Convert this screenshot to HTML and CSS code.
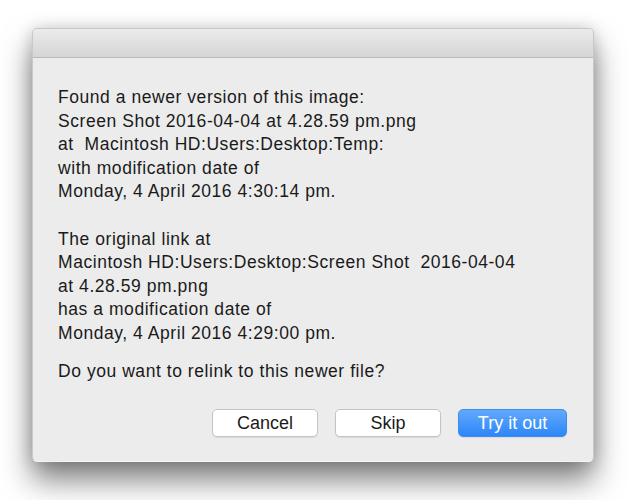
FILE: index.html
```html
<!DOCTYPE html>
<html lang="en">
  <head>
    <meta charset="UTF-8" />
    <title>Relink</title>
    <link rel="stylesheet" href="styles.css">
  </head>
  <body>
    <div class="dialog">
      <div class="titlebar"></div>
      <div class="content">
        <p>Found a newer version of this image:<br>
          Screen Shot 2016-04-04 at 4.28.59 pm.png<br>
          at&nbsp; Macintosh HD:Users:Desktop:Temp:<br>
          with modification date of<br>
          Monday, 4 April 2016 4:30:14 pm.</p>
        <p>The original link at<br>
          Macintosh HD:Users:Desktop:Screen Shot&nbsp; 2016-04-04<br>
          at 4.28.59 pm.png<br>
          has a modification date of<br>
          Monday, 4 April 2016 4:29:00 pm.</p>
        <p class="question">Do you want to relink to this newer file?</p>
      </div>
      <div class="buttons">
        <button class="btn">Cancel</button>
        <button class="btn">Skip</button>
        <button class="btn btn-primary">Try it out</button>
      </div>
    </div>
  </body>
</html>
```

FILE: styles.css
```css
* {
  margin: 0;
  padding: 0;
  box-sizing: border-box;
}

body {
  background: #fff;
  font-family: "Liberation Sans", Arial, sans-serif;
  color: #1a1a1a;
  min-height: 500px;
  padding: 28px 35px 38px 32px;
}

.dialog {
  width: 562px;
  height: 434px;
  background: #ececec;
  border-radius: 5px;
  border: 1px solid #c8c8c8;
  border-bottom-color: #f4f4f4;
  box-shadow: 0 18px 30px rgba(0, 0, 0, 0.5), 0 0 16px rgba(0, 0, 0, 0.16);
  overflow: hidden;
}

.titlebar {
  height: 29px;
  background: linear-gradient(#ebebeb, #d5d5d5);
  border-bottom: 1px solid #b9b9b9;
}

.content {
  padding: 28px 0 0 25px;
  font-size: 17.5px;
  letter-spacing: 0.55px;
  line-height: 23.6px;
}

.content p {
  margin-bottom: 23.6px;
}

.content .question {
  margin-top: -9.5px;
  margin-bottom: 0;
}

.buttons {
  display: flex;
  justify-content: flex-end;
  gap: 17px;
  padding: 26px 26px 0 0;
}

.btn {
  width: 106px;
  height: 28px;
  background: #fff;
  border: 1px solid #c4c4c4;
  border-radius: 5px;
  font-family: inherit;
  font-size: 18px;
  color: #1a1a1a;
  box-shadow: 0 1px 1px rgba(0, 0, 0, 0.08);
}

.btn-primary {
  width: 109px;
  background: linear-gradient(#62a9fb, #2d86f8);
  border-color: #3d8ef0;
  color: #fff;
}
```
